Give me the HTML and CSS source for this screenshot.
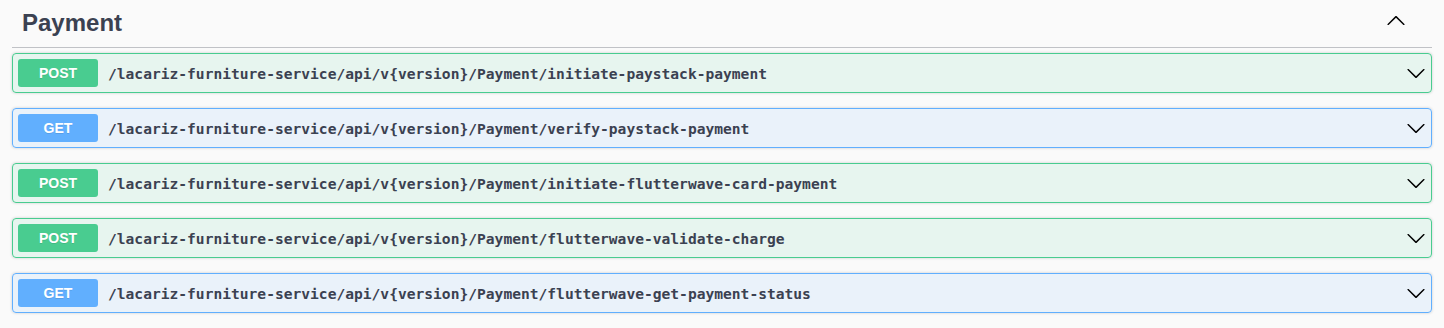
FILE: index.html
```html
<!DOCTYPE html>
<html lang="en">
  <head>
    <meta charset="UTF-8" />
    <meta name="viewport" content="width=device-width, initial-scale=1.0" />
    <title>Payment</title>
    <link rel="stylesheet" href="styles.css">
  </head>
  <body>
    <div class="tag-section">
      <h3 class="tag-heading">
        <span>Payment</span>
        <svg class="arrow" width="20" height="20" viewBox="0 0 20 20">
          <path d="M17.418 14.908c.272.268.709.268.979 0s.271-.701 0-.969l-7.908-7.83c-.27-.268-.707-.268-.979 0l-7.908 7.83c-.27.268-.27.701 0 .969.271.268.709.268.979 0L10 7.767l7.418 7.141z"/>
        </svg>
      </h3>

      <div class="opblock post">
        <span class="method">POST</span>
        <span class="path">/lacariz-furniture-service/api/v{version}/Payment/initiate-paystack-payment</span>
        <svg class="arrow" width="20" height="20" viewBox="0 0 20 20">
          <path d="M17.418 6.109c.272-.268.709-.268.979 0s.271.701 0 .969l-7.908 7.83c-.27.268-.707.268-.979 0l-7.908-7.83c-.27-.268-.27-.701 0-.969.271-.268.709-.268.979 0L10 13.25l7.418-7.141z"/>
        </svg>
      </div>

      <div class="opblock get">
        <span class="method">GET</span>
        <span class="path">/lacariz-furniture-service/api/v{version}/Payment/verify-paystack-payment</span>
        <svg class="arrow" width="20" height="20" viewBox="0 0 20 20">
          <path d="M17.418 6.109c.272-.268.709-.268.979 0s.271.701 0 .969l-7.908 7.83c-.27.268-.707.268-.979 0l-7.908-7.830c-.27-.268-.27-.701 0-.969.271-.268.709-.268.979 0L10 13.25l7.418-7.141z"/>
        </svg>
      </div>

      <div class="opblock post">
        <span class="method">POST</span>
        <span class="path">/lacariz-furniture-service/api/v{version}/Payment/initiate-flutterwave-card-payment</span>
        <svg class="arrow" width="20" height="20" viewBox="0 0 20 20">
          <path d="M17.418 6.109c.272-.268.709-.268.979 0s.271.701 0 .969l-7.908 7.83c-.27.268-.707.268-.979 0l-7.908-7.83c-.27-.268-.27-.701 0-.969.271-.268.709-.268.979 0L10 13.25l7.418-7.141z"/>
        </svg>
      </div>

      <div class="opblock post">
        <span class="method">POST</span>
        <span class="path">/lacariz-furniture-service/api/v{version}/Payment/flutterwave-validate-charge</span>
        <svg class="arrow" width="20" height="20" viewBox="0 0 20 20">
          <path d="M17.418 6.109c.272-.268.709-.268.979 0s.271.701 0 .969l-7.908 7.83c-.27.268-.707.268-.979 0l-7.908-7.83c-.27-.268-.27-.701 0-.969.271-.268.709-.268.979 0L10 13.25l7.418-7.141z"/>
        </svg>
      </div>

      <div class="opblock get">
        <span class="method">GET</span>
        <span class="path">/lacariz-furniture-service/api/v{version}/Payment/flutterwave-get-payment-status</span>
        <svg class="arrow" width="20" height="20" viewBox="0 0 20 20">
          <path d="M17.418 6.109c.272-.268.709-.268.979 0s.271.701 0 .969l-7.908 7.83c-.27.268-.707.268-.979 0l-7.908-7.83c-.27-.268-.27-.701 0-.969.271-.268.709-.268.979 0L10 13.25l7.418-7.141z"/>
        </svg>
      </div>
    </div>
  </body>
</html>
```

FILE: styles.css
```css
body {
  margin: 0;
  padding: 0 12px;
  background-color: #fafafa;
  font-family: "Liberation Sans", Arial, sans-serif;
  color: #3b4151;
}

.tag-heading {
  display: flex;
  align-items: center;
  justify-content: space-between;
  margin: 0 0 5px;
  padding: 9px 26px 10px 10px;
  font-size: 24px;
  line-height: 28px;
  font-weight: bold;
  color: #3b4151;
  border-bottom: 1px solid rgba(59, 65, 81, 0.3);
}

.arrow {
  flex-shrink: 0;
  fill: #000;
}

.tag-heading .arrow {
  position: relative;
  top: -3px;
}

/* One operation row */
.opblock {
  display: flex;
  align-items: center;
  margin: 0 0 15px;
  padding: 5px 5px 5px 5px;
  border: 1px solid;
  border-radius: 4px;
  box-shadow: 0 0 3px rgba(0, 0, 0, 0.19);
}

.opblock .arrow {
  margin-left: auto;
}

.method {
  min-width: 80px;
  padding: 6px 0;
  font-size: 14px;
  line-height: 16px;
  font-weight: bold;
  text-align: center;
  color: #fff;
  border-radius: 3px;
  text-shadow: 0 1px 0 rgba(0, 0, 0, 0.1);
}

.path {
  padding: 0 10px;
  font-family: "DejaVu Sans Mono", monospace;
  font-size: 14.6px;
  font-weight: bold;
  color: #3b4151;
}

.post {
  background: rgba(73, 204, 144, 0.1);
  border-color: #49cc90;
}

.post .method {
  background: #49cc90;
}

.get {
  background: rgba(97, 175, 254, 0.1);
  border-color: #61affe;
}

.get .method {
  background: #61affe;
}
```
